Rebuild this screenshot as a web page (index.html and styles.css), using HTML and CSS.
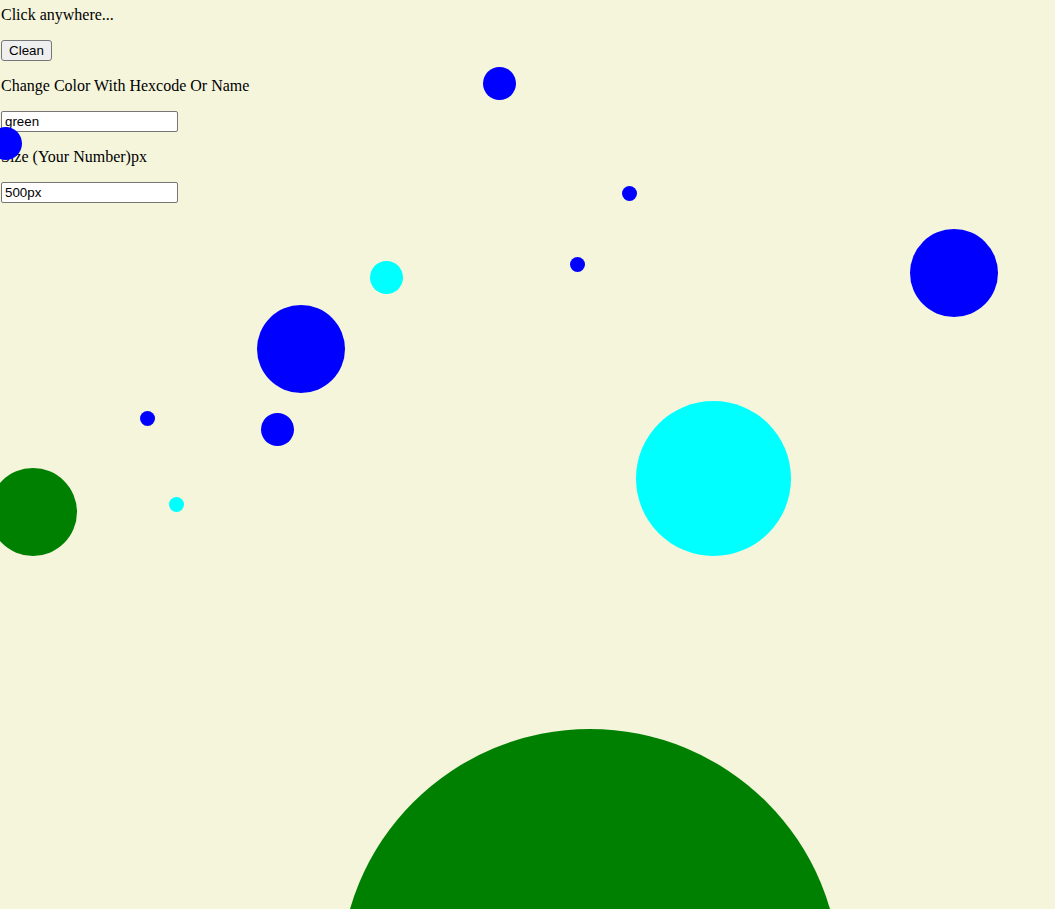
FILE: index.html
```html
<!DOCTYPE html>
<html lang="en">
<head>
<meta charset="utf-8">
<title>Click anywhere</title>
<link rel="stylesheet" href="styles.css">
</head>
<body>
<div class="controls">
  <p class="label">Click anywhere...</p>
  <button class="btn" type="button">Clean</button>
  <p class="label">Change Color With Hexcode Or Name</p>
  <input class="field" type="text" value="green">
  <p class="label">Size (Your Number)px</p>
  <input class="field" type="text" value="500px">
</div>
<div class="canvas">
  <div class="dot blue" style="left:482.7px;top:66.7px;width:33px;height:33px"></div>
  <div class="dot blue" style="left:-11.3px;top:126.9px;width:33px;height:33px"></div>
  <div class="dot blue" style="left:622px;top:186px;width:15px;height:15px"></div>
  <div class="dot blue" style="left:570px;top:256.8px;width:15px;height:15px"></div>
  <div class="dot cyan" style="left:370px;top:261px;width:33px;height:33px"></div>
  <div class="dot blue" style="left:910px;top:229px;width:88px;height:88px"></div>
  <div class="dot blue" style="left:257px;top:305px;width:88px;height:88px"></div>
  <div class="dot blue" style="left:140px;top:411px;width:15px;height:15px"></div>
  <div class="dot blue" style="left:261px;top:413px;width:33px;height:33px"></div>
  <div class="dot cyan" style="left:169px;top:497px;width:15px;height:15px"></div>
  <div class="dot green" style="left:-11.3px;top:467.8px;width:88px;height:88px"></div>
  <div class="dot cyan" style="left:636px;top:400.7px;width:155px;height:155px"></div>
  <div class="dot green" style="left:340px;top:729px;width:500px;height:500px"></div>
</div>
</body>
</html>
```

FILE: styles.css
```css
html, body {
  height: 100%;
  overflow: hidden;
}
body {
  margin: 0;
  background: #f5f5dc;
  font-family: "Liberation Serif", "Times New Roman", serif;
  font-size: 16px;
  color: #000;
  position: relative;
}
.controls {
  display: flex;
  flex-direction: column;
  align-items: flex-start;
  gap: 16px;
  padding: 6px 0 0 1px;
}
.label {
  margin: 0;
  line-height: 18px;
  height: 18px;
}
.btn {
  box-sizing: border-box;
  width: 51px;
  height: 21px;
  margin: 0;
  padding: 0 6px;
  font-family: "Liberation Sans", Arial, sans-serif;
  font-size: 13.33px;
  color: #000;
  background: #efefef;
  border: 1px solid #767676;
  border-radius: 3px;
}
.field {
  box-sizing: border-box;
  width: 177px;
  height: 21px;
  margin: 0;
  padding: 1px 3px;
  font-family: "Liberation Sans", Arial, sans-serif;
  font-size: 13.33px;
  color: #000;
  background: #fff;
  border: 1px solid #767676;
  border-radius: 2px;
}
.canvas {
  position: absolute;
  inset: 0;
  overflow: hidden;
  pointer-events: none;
}
.dot {
  position: absolute;
  border-radius: 50%;
}
.blue { background: #0000ff; }
.cyan { background: #00ffff; }
.green { background: #008000; }
```
